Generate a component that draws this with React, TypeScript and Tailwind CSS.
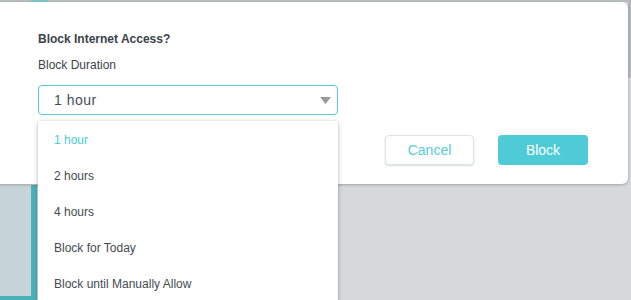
import { useState } from 'react';

const options = ['1 hour', '2 hours', '4 hours', 'Block for Today', 'Block until Manually Allow'];

export default function App() {
  const [selected] = useState('1 hour');

  return (
    <div
      className="relative w-[631px] h-[300px] overflow-hidden bg-[#d5d9da]"
      style={{ fontFamily: '"Liberation Sans", Arial, sans-serif' }}
    >
      {/* page behind the overlay */}
      <div className="flex h-[2px] bg-[#b9bfc1]">
        <div className="w-[31px]" />
        <div className="w-[17px] bg-[#7fc3c9]" />
      </div>
      <div className="absolute left-0 top-[185px] w-[37px] h-[115px] bg-[#4ab1b9] pr-[6px] pb-[4px]">
        <div className="w-full h-full bg-[#c6d4d8]" />
      </div>
      <div className="absolute right-0 top-0 w-[3px] h-[78px] bg-[#b4b9bb]" />

      {/* modal */}
      <div className="absolute left-[-10px] top-[2px] w-[638px] h-[182px] bg-white rounded-[6px] shadow-[0_1px_3px_rgba(0,0,0,0.25)] pl-[48px] pt-[29px]">
        <h2 className="text-[12px] leading-[16px] font-bold text-[#3b4349]">Block Internet Access?</h2>
        <p className="mt-[10px] text-[12px] leading-[16px] text-[#3b4349]">Block Duration</p>
        <div className="mt-[12px] flex items-end justify-between">
          <div className="w-[300px] h-[30px] border border-[#56cdd8] rounded-[4px] flex items-center justify-between pl-[15px] pr-[6px]">
            <span className="text-[14px] tracking-[0.5px] text-[#415058]">{selected}</span>
            <svg width="11" height="7" viewBox="0 0 11 7">
              <path d="M0 0 L11 0 L5.5 7 Z" fill="#9a9a9a" />
            </svg>
          </div>
        </div>
        <div className="absolute left-[395px] top-[133px] flex gap-[24px]">
          <button className="w-[89px] h-[30px] rounded-[4px] bg-white border border-[#dfe5e6] shadow-[0_1px_2px_rgba(0,0,0,0.15)] text-[14px] text-[#56cdd8]">
            Cancel
          </button>
          <button className="w-[90px] h-[30px] rounded-[4px] bg-[#4ecbd6] text-[14px] text-white">
            Block
          </button>
        </div>
      </div>

      {/* open dropdown */}
      <ul className="absolute left-[38px] top-[121px] w-[300px] h-[200px] bg-white rounded-[3px] shadow-[0_1px_4px_rgba(0,0,0,0.3)] pt-[1px]">
        {options.map((o) => (
          <li
            key={o}
            className={`h-[36px] flex items-center pl-[16px] text-[12px] ${
              o === selected ? 'text-[#4ecbd6]' : 'text-[#434b51]'
            }`}
          >
            {o}
          </li>
        ))}
      </ul>
    </div>
  );
}
